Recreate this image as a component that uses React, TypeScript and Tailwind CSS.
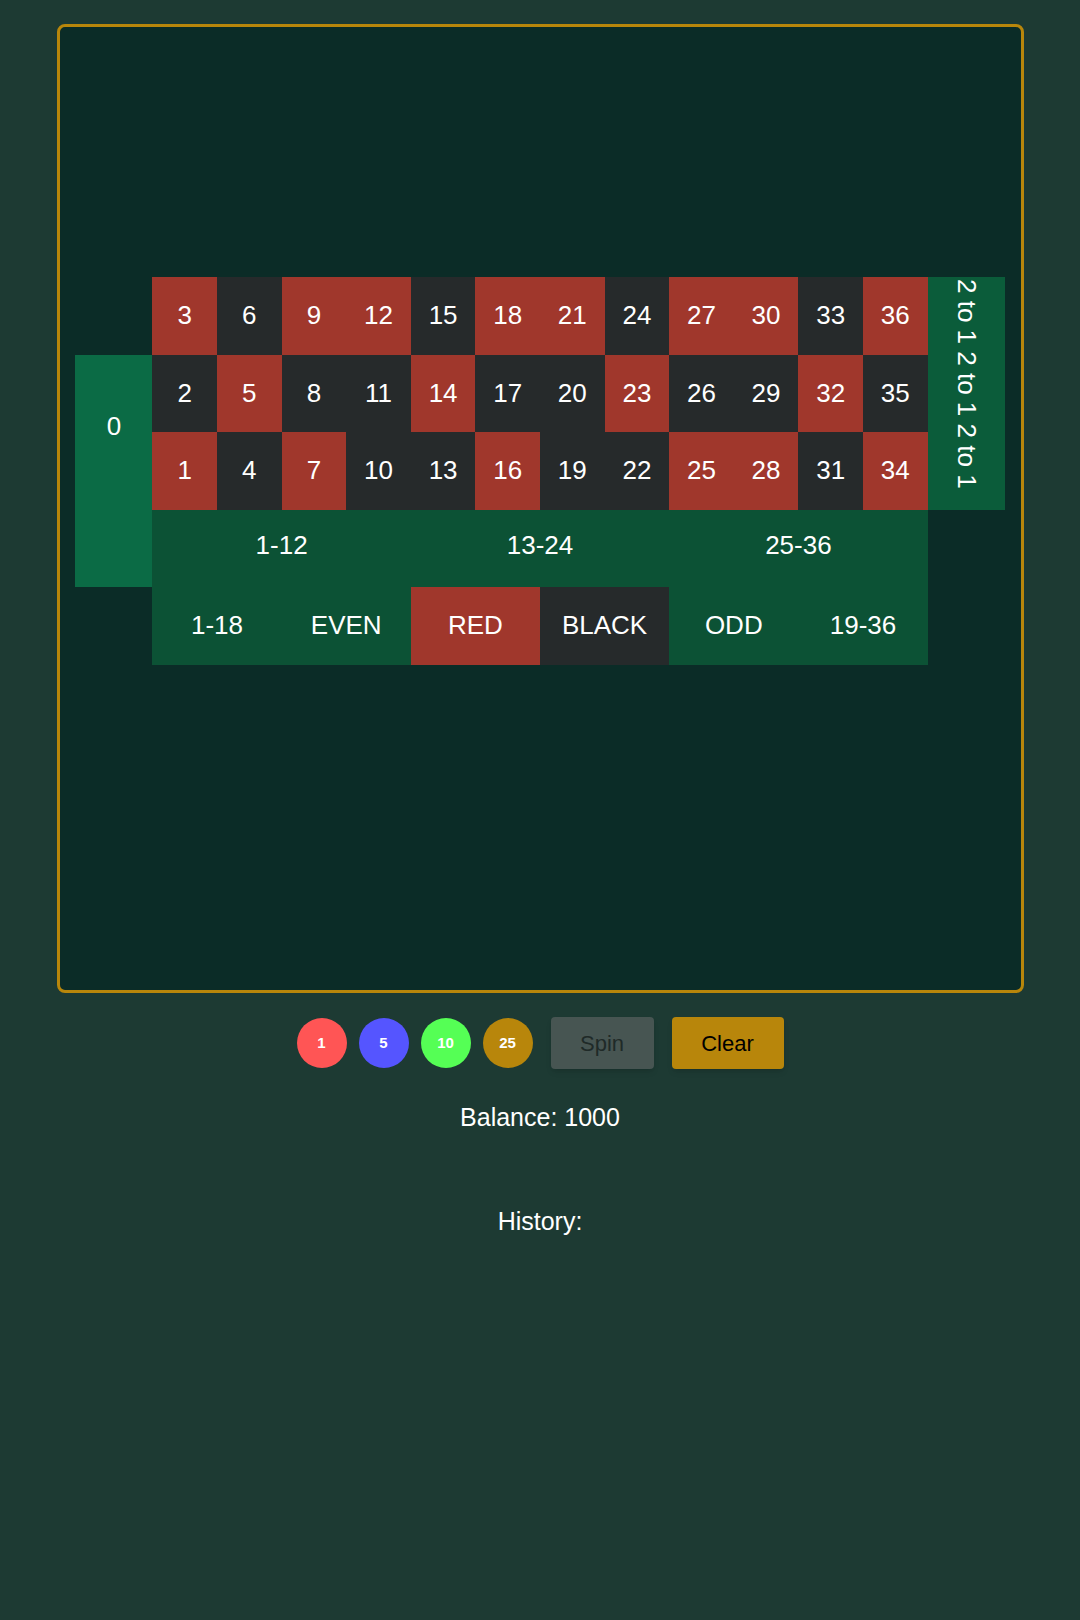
const reds = new Set([1, 3, 5, 7, 9, 12, 14, 16, 18, 21, 23, 25, 27, 28, 30, 32, 34, 36]);

const rows = [3, 2, 1].map((r) => Array.from({ length: 12 }, (_, c) => c * 3 + r));

function Cell({ n }: { n: number }) {
  return (
    <div
      className={`flex items-center justify-center ${reds.has(n) ? "bg-[#a0372c]" : "bg-[#262a2b]"}`}
    >
      {n}
    </div>
  );
}

export default function App() {
  return (
    <div
      className="min-h-[1620px] bg-[#1d3a33] pt-[24px] text-white"
      style={{ fontFamily: '"Liberation Sans", Arial, sans-serif' }}
    >
      <div className="mx-auto flex h-[969px] w-[967px] justify-center rounded-lg border-[3px] border-[#b8860b] bg-[#0b2c27] pt-[250px]">
        <div className="grid h-fit grid-cols-[77px_repeat(12,64.6px)_77px] grid-rows-[repeat(5,77.5px)] text-[26px]">
          <div />
          {rows[0].map((n) => (
            <Cell key={n} n={n} />
          ))}
          <div className="row-span-3 flex items-center justify-start bg-[#0b5c3a] pt-[2px] [writing-mode:vertical-rl]">
            2 to 1 2 to 1 2 to 1
          </div>
          <div className="row-span-3 flex justify-center bg-[#0b6b45] pt-[52px]">0</div>
          {rows[1].map((n) => (
            <Cell key={n} n={n} />
          ))}
          {rows[2].map((n) => (
            <Cell key={n} n={n} />
          ))}
          {["1-12", "13-24", "25-36"].map((t) => (
            <div key={t} className="col-span-4 flex items-center justify-center bg-[#0c5235] pb-[6px]">
              {t}
            </div>
          ))}
          <div />
          <div />
          <div className="col-span-2 flex items-center justify-center bg-[#0c5235]">1-18</div>
          <div className="col-span-2 flex items-center justify-center bg-[#0c5235]">EVEN</div>
          <div className="col-span-2 flex items-center justify-center bg-[#a0372c]">RED</div>
          <div className="col-span-2 flex items-center justify-center bg-[#262a2b]">BLACK</div>
          <div className="col-span-2 flex items-center justify-center bg-[#0c5235]">ODD</div>
          <div className="col-span-2 flex items-center justify-center bg-[#0c5235]">19-36</div>
        </div>
      </div>

      <div className="mt-[24px] flex items-center justify-center gap-[12px]">
        <div className="flex h-[50px] w-[50px] items-center justify-center rounded-full bg-[#ff5555] text-[15px] font-bold">1</div>
        <div className="flex h-[50px] w-[50px] items-center justify-center rounded-full bg-[#5555ff] text-[15px] font-bold">5</div>
        <div className="flex h-[50px] w-[50px] items-center justify-center rounded-full bg-[#55ff55] text-[15px] font-bold">10</div>
        <div className="flex h-[50px] w-[50px] items-center justify-center rounded-full bg-[#b8860b] text-[15px] font-bold">25</div>
        <button className="ml-[6px] h-[52px] w-[103px] rounded bg-[#475552] text-[22px] text-[#1f2a28] shadow-md">Spin</button>
        <button className="ml-[6px] h-[52px] w-[112px] rounded bg-[#b8860b] text-[22px] text-black shadow-md">Clear</button>
      </div>

      <div className="mt-[30px] text-center text-[25px]">Balance: 1000</div>
      <div className="mt-[66px] text-center text-[25px]">History:</div>
    </div>
  );
}
